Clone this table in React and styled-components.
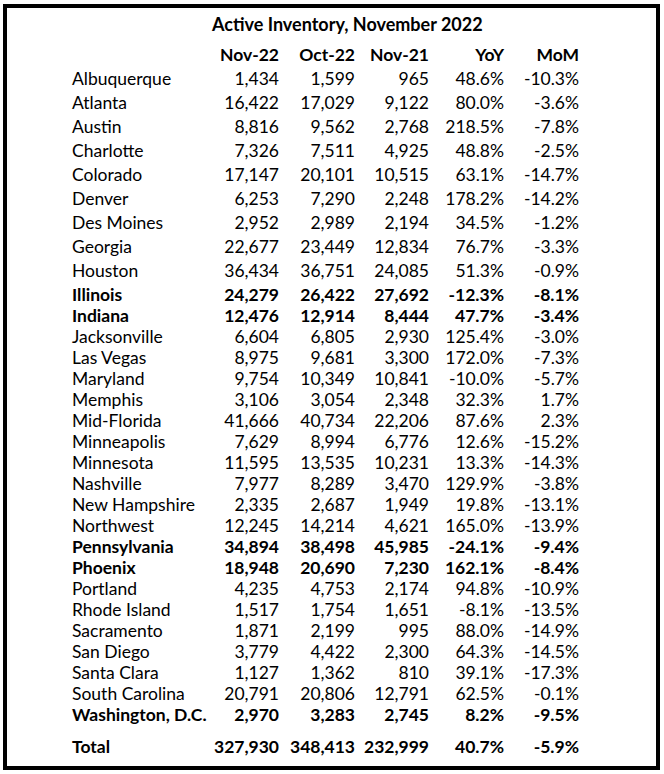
import React from "react";
import styled, { createGlobalStyle } from "styled-components";

const GlobalStyle = createGlobalStyle`
  body {
    margin: 0;
    background: #ffffff;
    font-family: "Lato", "Liberation Sans", sans-serif;
    color: #000000;
  }
`;

const Frame = styled.div`
  box-sizing: border-box;
  width: 657px;
  height: 766px;
  margin: 4px 0 0 3px;
  border: 4px solid #000000;
  background: #ffffff;
`;

const Title = styled.div`
  display: flex;
  align-items: flex-end;
  height: 27px;
  font-size: 18px;
  font-weight: 700;
  padding-left: 205px;
`;

/* cells sit on the bottom of the row, as in a spreadsheet */
const Row = styled.div`
  display: flex;
  align-items: flex-end;
  height: ${(props) => props.height || 21}px;
  margin-top: ${(props) => props.gap || 0}px;
  padding-left: 65px;
  font-size: 17.5px;
  font-weight: ${(props) => (props.bold ? 700 : 400)};
  white-space: nowrap;
`;

const Name = styled.div`
  width: 130px;
  overflow: visible;
`;

const Cell = styled.div`
  width: ${(props) => props.width}px;
  text-align: right;
`;

const widths = [77, 76, 74, 75, 75];

const rows = [
  ["Albuquerque", "1,434", "1,599", "965", "48.6%", "-10.3%"],
  ["Atlanta", "16,422", "17,029", "9,122", "80.0%", "-3.6%"],
  ["Austin", "8,816", "9,562", "2,768", "218.5%", "-7.8%"],
  ["Charlotte", "7,326", "7,511", "4,925", "48.8%", "-2.5%"],
  ["Colorado", "17,147", "20,101", "10,515", "63.1%", "-14.7%"],
  ["Denver", "6,253", "7,290", "2,248", "178.2%", "-14.2%"],
  ["Des Moines", "2,952", "2,989", "2,194", "34.5%", "-1.2%"],
  ["Georgia", "22,677", "23,449", "12,834", "76.7%", "-3.3%"],
  ["Houston", "36,434", "36,751", "24,085", "51.3%", "-0.9%"],
  ["Illinois", "24,279", "26,422", "27,692", "-12.3%", "-8.1%", true],
  ["Indiana", "12,476", "12,914", "8,444", "47.7%", "-3.4%", true],
  ["Jacksonville", "6,604", "6,805", "2,930", "125.4%", "-3.0%"],
  ["Las Vegas", "8,975", "9,681", "3,300", "172.0%", "-7.3%"],
  ["Maryland", "9,754", "10,349", "10,841", "-10.0%", "-5.7%"],
  ["Memphis", "3,106", "3,054", "2,348", "32.3%", "1.7%"],
  ["Mid-Florida", "41,666", "40,734", "22,206", "87.6%", "2.3%"],
  ["Minneapolis", "7,629", "8,994", "6,776", "12.6%", "-15.2%"],
  ["Minnesota", "11,595", "13,535", "10,231", "13.3%", "-14.3%"],
  ["Nashville", "7,977", "8,289", "3,470", "129.9%", "-3.8%"],
  ["New Hampshire", "2,335", "2,687", "1,949", "19.8%", "-13.1%"],
  ["Northwest", "12,245", "14,214", "4,621", "165.0%", "-13.9%"],
  ["Pennsylvania", "34,894", "38,498", "45,985", "-24.1%", "-9.4%", true],
  ["Phoenix", "18,948", "20,690", "7,230", "162.1%", "-8.4%", true],
  ["Portland", "4,235", "4,753", "2,174", "94.8%", "-10.9%"],
  ["Rhode Island", "1,517", "1,754", "1,651", "-8.1%", "-13.5%"],
  ["Sacramento", "1,871", "2,199", "995", "88.0%", "-14.9%"],
  ["San Diego", "3,779", "4,422", "2,300", "64.3%", "-14.5%"],
  ["Santa Clara", "1,127", "1,362", "810", "39.1%", "-17.3%"],
  ["South Carolina", "20,791", "20,806", "12,791", "62.5%", "-0.1%"],
  ["Washington, D.C.", "2,970", "3,283", "2,745", "8.2%", "-9.5%", true],
];

const DataRow = ({ cells, bold, height, gap }) => (
  <Row bold={bold} height={height} gap={gap}>
    <Name>{cells[0]}</Name>
    {cells.slice(1).map((c, i) => (
      <Cell key={i} width={widths[i]}>
        {c}
      </Cell>
    ))}
  </Row>
);

const App = () => (
  <>
    <GlobalStyle />
    <Frame>
      <Title>Active Inventory, November 2022</Title>
      <DataRow cells={["", "Nov-22", "Oct-22", "Nov-21", "YoY", "MoM"]} bold height={30} />
      {rows.map((r, i) => (
        <DataRow key={r[0]} cells={r.slice(0, 6)} bold={r[6]} height={i < 10 ? 24 : 21} />
      ))}
      <DataRow
        cells={["Total", "327,930", "348,413", "232,999", "40.7%", "-5.9%"]}
        bold
        gap={11}
      />
    </Frame>
  </>
);

export default App;
